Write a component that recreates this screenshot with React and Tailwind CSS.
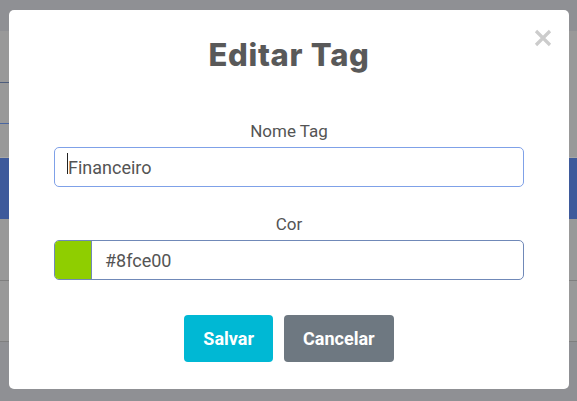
import React from 'react'

// Background page behind the overlay (dimmed)
function Backdrop() {
  return (
    <div className="flex h-[401px] w-[577px] flex-col bg-[#999999]">
      <div className="h-[31px] bg-[#8f9094]" />
      <div className="flex h-[126px]">
        <div className="flex w-[40px] flex-col">
          <div className="h-[52px] border-b border-[#4d5d7c]" />
          <div className="h-[41px] border-b border-[#4a66a0]" />
        </div>
      </div>
      <div className="h-[1px] bg-[#a7a7a7]" />
      <div className="h-[61px] bg-[#3e5a9b]" />
      <div className="h-[62px] border-b border-[#7f7f7f]" />
      <div className="h-[61px] border-b border-[#7f7f7f]" />
      <div className="flex-1 bg-[#8f9094]" />
    </div>
  )
}

function EditTagModal() {
  return (
    <div className="absolute left-[9px] top-[10px] flex h-[379px] w-[560px] flex-col items-center rounded-[5px] bg-white px-[45px] pt-[27px] font-['Roboto',sans-serif]">
      <button className="absolute right-[17px] top-[19px] flex h-[18px] w-[18px] items-center justify-center">
        <svg width="18" height="18" viewBox="0 0 18 18">
          <path d="M2 2 L16 16 M16 2 L2 16" stroke="#cccccc" strokeWidth="3.2" />
        </svg>
      </button>

      <h2 className="h-[36px] font-['Inter',sans-serif] text-[31px] font-extrabold leading-[36px] tracking-[0.7px] text-[#595959]">
        Editar Tag
      </h2>

      <label className="mt-[46px] h-[24px] text-[17px] leading-[24px] text-[#545454]">Nome Tag</label>
      <div className="mt-[4px] flex h-[40px] w-[470px] items-center rounded-[5px] border border-[#7fa1e8] pl-[13px] text-[18px] text-[#545454]">
        <span className="relative">
          <span className="absolute left-[-1px] top-[-1px] h-[21px] w-[1px] bg-[#222]" />
          Financeiro
        </span>
      </div>

      <label className="mt-[25px] h-[24px] text-[17px] leading-[24px] text-[#545454]">Cor</label>
      <div className="mt-[4px] flex h-[40px] w-[470px] items-stretch overflow-hidden rounded-[5px] border border-[#7089b8] text-[18px] text-[#545454]">
        <div className="w-[37px] border-r border-[#7089b8] bg-[#8fce00]" />
        <div className="flex items-center pl-[13px]">#8fce00</div>
      </div>

      <div className="mt-[35px] flex gap-[11px]">
        <button className="h-[47px] rounded-[4px] bg-[#00b8d4] px-[19px] text-[18px] font-bold text-white">Salvar</button>
        <button className="h-[47px] rounded-[4px] bg-[#6e7881] px-[19px] text-[18px] font-bold text-white">Cancelar</button>
      </div>
    </div>
  )
}

export default function App() {
  return (
    <div className="relative h-[401px] w-[577px] overflow-hidden">
      <Backdrop />
      <EditTagModal />
    </div>
  )
}
